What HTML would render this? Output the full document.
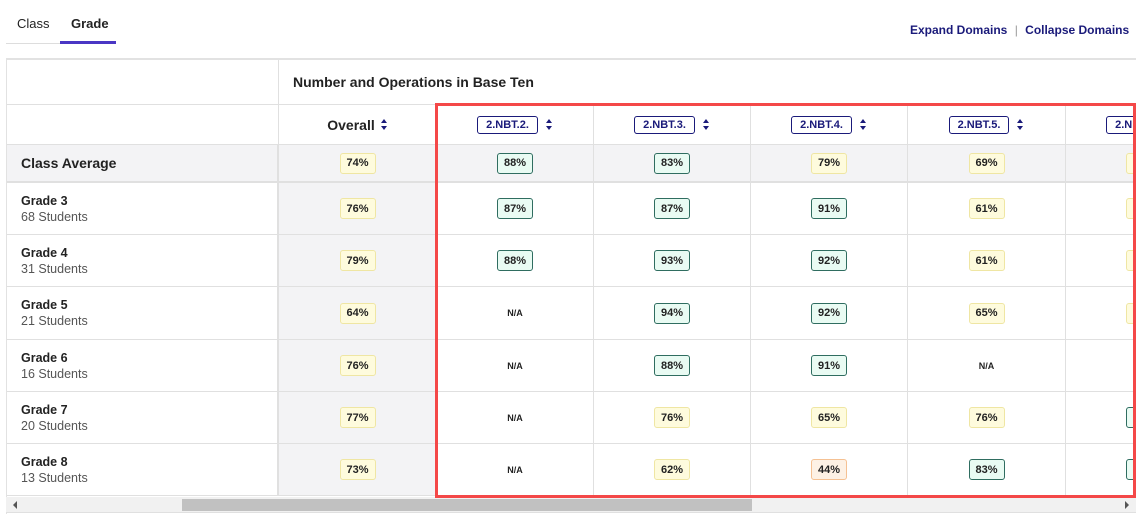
<!DOCTYPE html>
<html><head><meta charset="utf-8">
<style>
*{box-sizing:border-box;margin:0;padding:0}
body{width:1142px;height:515px;background:#fff;font-family:"Liberation Sans",Arial,sans-serif;position:relative;overflow:hidden;color:#222}
.abs{position:absolute}
.tab{position:absolute;top:16px;font-size:13px;color:#222}
.wrap{position:absolute;left:6px;top:58px;width:1130px;height:456px;overflow:hidden;border-top:2px solid #e2e2e2;border-left:1px solid #e2e2e2}
.cell{position:absolute;border-right:1px solid #e0e0e0;border-bottom:1px solid #e0e0e0;display:flex;align-items:center;justify-content:center}
.pill{width:36px;height:21px;border:1px solid;border-radius:3px;font-size:11px;font-weight:bold;display:flex;align-items:center;justify-content:center;color:#222}
.g{background:#e9fbf3;border-color:#2f6d60}
.y{background:#fefbdd;border-color:#efe6a3}
.o{background:#fdf1e5;border-color:#f5c193}
.na{font-size:9px;font-weight:bold;color:#222}
.tag{border:1px solid #1a1a7a;border-radius:3px;height:18px;padding:0 8px;font-size:11px;font-weight:bold;color:#1a1a7a;display:flex;align-items:center}
.sort{margin-left:8px;display:inline-block;width:7px;height:11px;position:relative}
.sort:before{content:"";position:absolute;left:0;top:0;border-left:3.5px solid transparent;border-right:3.5px solid transparent;border-bottom:4.5px solid #1a1a7a}
.sort:after{content:"";position:absolute;left:0;bottom:0;border-left:3.5px solid transparent;border-right:3.5px solid transparent;border-top:4.5px solid #1a1a7a}
.name{justify-content:center;padding-left:14px;flex-direction:column;align-items:flex-start}
.name b{font-size:12.5px;color:#222}
.name span{font-size:12.5px;color:#555;margin-top:2px}
</style></head><body>
<div class="tab" style="left:17px">Class</div>
<div class="tab" style="left:71px;font-weight:bold">Grade</div>
<div class="abs" style="left:6px;top:43px;width:110px;height:1px;background:#ddd"></div>
<div class="abs" style="left:60px;top:41px;width:56px;height:3px;background:#4a36c4"></div>
<div class="abs" style="left:910px;top:23px;font-size:12px;color:#1a1a7a;font-weight:bold;white-space:nowrap">Expand Domains <span style="color:#999;font-weight:normal;margin:0 4px">|</span> Collapse Domains</div>

<div class="wrap" id="w"></div>

<div class="abs" style="left:6px;top:497px;width:1130px;height:16px;background:#f1f1f1;border-bottom:1px solid #e0e0e0"></div>
<div class="abs" style="left:182px;top:499px;width:570px;height:12px;background:#c1c1c1"></div>
<div class="abs" style="left:13px;top:501px;border-top:4px solid transparent;border-bottom:4px solid transparent;border-right:4px solid #555"></div>
<div class="abs" style="left:1125px;top:501px;border-top:4px solid transparent;border-bottom:4px solid transparent;border-left:4px solid #555"></div>

<div class="abs" style="left:435px;top:103px;width:701px;height:395px;border:3px solid #f44848"></div>

<script>
var w=document.getElementById('w');
var xs=[0,272,430,587,744,901,1059,1216];
var ys=[0,45,85,123,175,227,280,332,384,436];
function cell(c,r,html,extra){
  var d=document.createElement('div');d.className='cell '+(extra||'');
  d.style.left=xs[c]+'px';d.style.top=ys[r]+'px';
  d.style.width=(xs[c+1]-xs[c])+'px';d.style.height=(ys[r+1]-ys[r])+'px';
  d.innerHTML=html;w.appendChild(d);return d;
}
cell(0,0,'');
var h=document.createElement('div');h.className='cell';h.style.cssText='left:272px;top:0;width:900px;height:45px;justify-content:flex-start;padding-left:14px;font-size:14px;font-weight:bold;border-right:none';h.textContent='Number and Operations in Base Ten';w.appendChild(h);
cell(0,1,'');
cell(1,1,'<span style="font-size:14px;font-weight:bold">Overall</span><span class="sort" style="margin-left:6px"></span>');
['2.NBT.2.','2.NBT.3.','2.NBT.4.','2.NBT.5.','2.NBT.6.'].forEach(function(t,i){cell(i+2,1,'<div class="tag">'+t+'</div><span class="sort"></span>')});
var rows=[
['Class Average',null,['y74','g88','g83','y79','y69','y70']],
['Grade 3','68 Students',['y76','g87','g87','g91','y61','y70']],
['Grade 4','31 Students',['y79','g88','g93','g92','y61','y70']],
['Grade 5','21 Students',['y64','na','g94','g92','y65','y70']],
['Grade 6','16 Students',['y76','na','g88','g91','na','']],
['Grade 7','20 Students',['y77','na','y76','y65','y76','g80']],
['Grade 8','13 Students',['y73','na','y62','o44','g83','g80']]
];
rows.forEach(function(r,i){
  var ri=i+2;
  var n=cell(0,ri,r[1]?'<b>'+r[0]+'</b><span>'+r[1]+'</span>':'<b style="font-size:14px">'+r[0]+'</b>','name');
  n.style.borderRight='2px solid #e0e0e0';
  r[2].forEach(function(v,j){
    var html='';
    if(v==='na')html='<span class="na">N/A</span>';
    else if(v)html='<div class="pill '+v[0]+'">'+v.slice(1)+'%</div>';
    var c=cell(j+1,ri,html);
    if(i==0||j==0)c.style.background='#f3f3f5';
    if(i==0)c.style.borderBottom='2px solid #e0e0e0';
  });
  if(i==0){n.style.background='#f3f3f5';n.style.borderBottom='2px solid #e0e0e0';}
});
</script>
</body></html>
